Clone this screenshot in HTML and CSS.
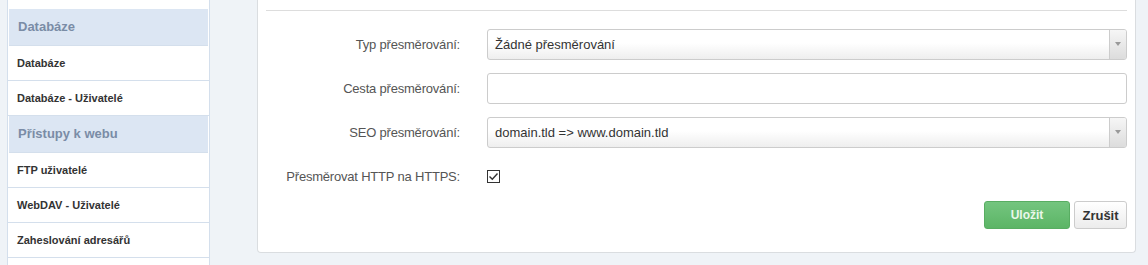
FILE: index.html
```html
<!DOCTYPE html>
<html lang="cs">
<head>
<meta charset="utf-8">
<title>Přesměrování domény</title>
<link rel="stylesheet" href="styles.css">
</head>
<body>

<div class="layout">
	<ul class="side">
		<li class="side-cut"></li>
		<li class="side-head">Databáze</li>
		<li class="side-item">Databáze</li>
		<li class="side-item">Databáze - Uživatelé</li>
		<li class="side-head">Přístupy k webu</li>
		<li class="side-item">FTP uživatelé</li>
		<li class="side-item">WebDAV - Uživatelé</li>
		<li class="side-item">Zaheslování adresářů</li>
		<li class="side-cut side-end"></li>
	</ul>

	<div class="panel">
		<div class="panel-top"></div>

		<div class="form">
			<label class="lbl">Typ přesměrování:</label>
			<div class="select">
				<span class="select-val">Žádné přesměrování</span>
				<span class="select-arrow"></span>
			</div>

			<label class="lbl">Cesta přesměrování:</label>
			<div class="input"></div>

			<label class="lbl">SEO přesměrování:</label>
			<div class="select">
				<span class="select-val">domain.tld =&gt; www.domain.tld</span>
				<span class="select-arrow"></span>
			</div>

			<label class="lbl">Přesměrovat HTTP na HTTPS:</label>
			<div class="check-wrap">
				<span class="check">
					<svg width="11" height="11" viewBox="0 0 11 11"><path d="M1.5 5.5 L4.3 8.3 L9.5 2.5" fill="none" stroke="#333" stroke-width="1.4"/></svg>
				</span>
			</div>
		</div>

		<div class="actions">
			<button class="btn btn-ok">Uložit</button>
			<button class="btn btn-cancel">Zrušit</button>
		</div>
	</div>
</div>

</body>
</html>
```

FILE: styles.css
```css
html, body {
	margin: 0;
	padding: 0;
	height: 100%;
}

body {
	background: #eff3f7;
	font-family: "Liberation Sans", Arial, sans-serif;
	color: #333;
	overflow: hidden;
}

ul, li {
	margin: 0;
	padding: 0;
	list-style-type: none;
}

.layout {
	display: flex;
	align-items: flex-start;
	gap: 47px;
	padding-left: 7px;
}

/* sidebar */
.side {
	width: 203px;
	flex: none;
	background: #fff;
	border-left: 1px solid #d4dfec;
	border-right: 1px solid #d4dfec;
	box-sizing: border-box;
}

.side-cut {
	height: 9px;
}

.side-end {
	height: 8px;
}

.side-head {
	height: 36px;
	line-height: 36px;
	margin: 0 1px;
	padding-left: 9px;
	background: #dce6f3;
	color: #7a8ca6;
	font-size: 13px;
	font-weight: bold;
	border-bottom: 1px solid #d4dfec;
}

.side-item {
	height: 34px;
	line-height: 34px;
	padding-left: 9px;
	font-size: 11px;
	font-weight: bold;
	color: #333;
	border-bottom: 1px solid #d4dfec;
}

/* main panel */
.panel {
	width: 879px;
	flex: none;
	box-sizing: border-box;
	background: #fff;
	border: 1px solid #dadde0;
	border-top: none;
	border-radius: 0 0 4px 4px;
	padding: 0 8px 23px 8px;
}

.panel-top {
	height: 10px;
	border-bottom: 1px solid #ddd;
}

.form {
	display: grid;
	grid-template-columns: 194px 1fr;
	grid-auto-rows: 31px;
	column-gap: 27px;
	row-gap: 13px;
	margin-top: 18px;
}

.lbl {
	font-size: 13px;
	letter-spacing: -0.2px;
	color: #555;
	text-align: right;
	line-height: 31px;
}

.select, .input {
	border: 1px solid #ccc;
	border-radius: 3px;
	box-sizing: border-box;
}

.select {
	display: flex;
	background: linear-gradient(#fff 0%, #fff 45%, #eee 100%);
}

.select-val {
	flex: 1;
	padding-left: 7px;
	font-size: 13px;
	line-height: 29px;
	color: #333;
}

.select-arrow {
	width: 16px;
	border-left: 1px solid #ccc;
	border-radius: 0 2px 2px 0;
	background: linear-gradient(#f6f6f6, #dcdcdc);
	position: relative;
}

.select-arrow:after {
	content: '';
	position: absolute;
	left: 5px;
	top: 12px;
	border-left: 3px solid transparent;
	border-right: 3px solid transparent;
	border-top: 4px solid #999;
}

.input {
	background: #fff;
}

.check-wrap {
	display: flex;
	align-items: center;
}

.check {
	width: 13px;
	height: 13px;
	box-sizing: border-box;
	border: 1px solid #333;
	background: #fff;
	display: flex;
	align-items: center;
	justify-content: center;
}

.check svg {
	display: block;
}

/* buttons */
.actions {
	display: flex;
	justify-content: flex-end;
	gap: 4px;
	margin-top: 9px;
}

.btn {
	height: 28px;
	border-radius: 3px;
	font-family: "Liberation Sans", Arial, sans-serif;
	font-weight: bold;
	padding: 0;
	cursor: pointer;
}

.btn-ok {
	width: 86px;
	font-size: 12px;
	color: #eaf7ea;
	background: linear-gradient(#74c57f, #5cb566);
	border: 1px solid #58ad62;
}

.btn-cancel {
	width: 53px;
	font-size: 13px;
	color: #333;
	background: linear-gradient(#fff, #ececec);
	border: 1px solid #ccc;
}
```
